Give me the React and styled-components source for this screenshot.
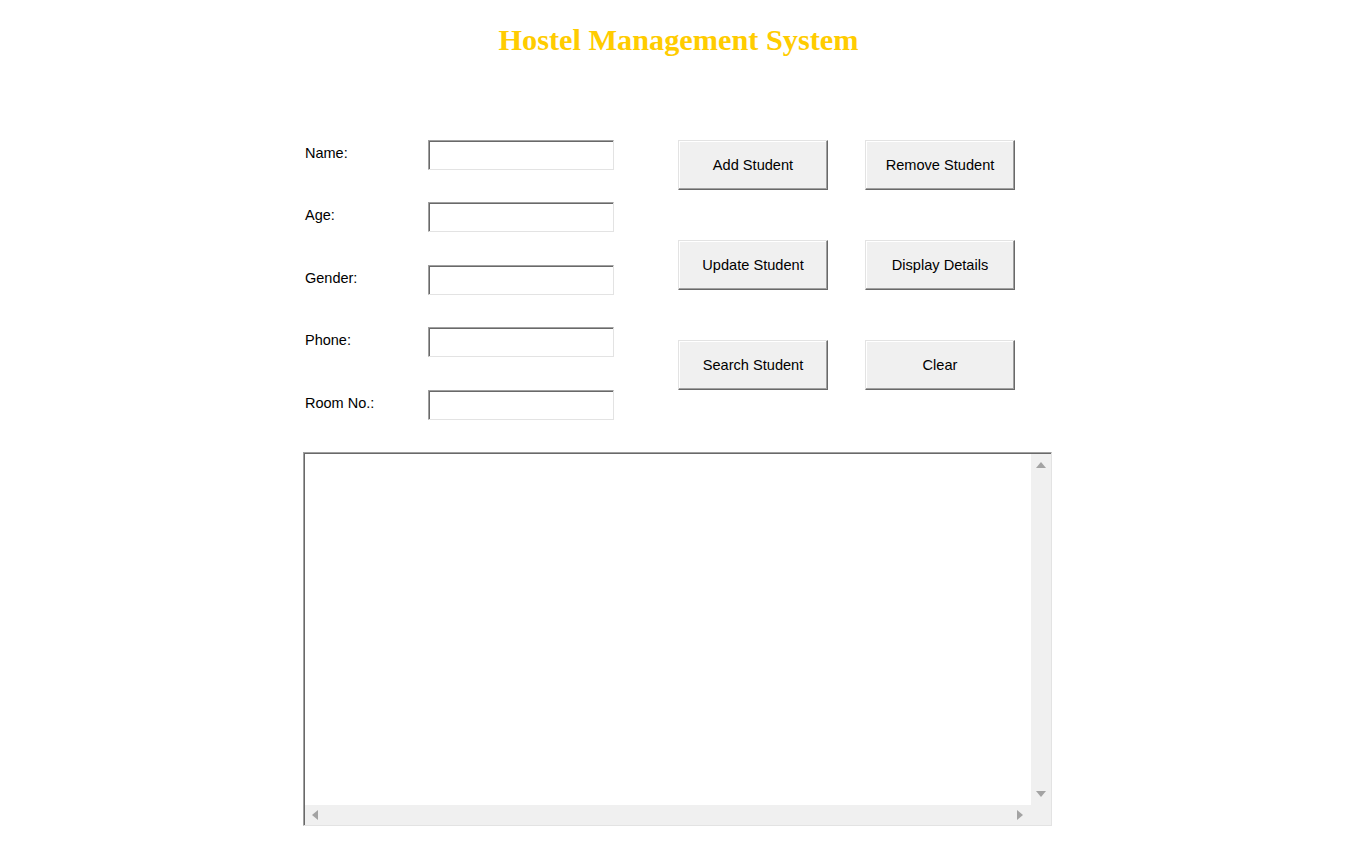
import React from 'react'
import styled, { createGlobalStyle } from 'styled-components'

const GlobalStyle = createGlobalStyle`
  html, body {
    margin: 0;
    padding: 0;
    background: #fff;
  }
  body {
    font-family: 'Liberation Sans', Arial, sans-serif;
  }
`

const Page = styled.div`
  width: 1357px;
  height: 852px;
  display: flex;
  flex-direction: column;
  align-items: center;
`

const Title = styled.h1`
  margin: 22px 0 0;
  font-family: 'Liberation Serif', 'Times New Roman', serif;
  font-weight: 700;
  font-size: 30.3px;
  line-height: 36px;
  color: #ffcc00;
`

const Main = styled.div`
  width: 749px;
  margin-top: 82px;
  display: flex;
  flex-direction: column;
`

const Top = styled.div`
  display: flex;
  height: 312px;
`

const Fields = styled.div`
  display: flex;
  flex-direction: column;
  width: 374px;
`

const Row = styled.div`
  display: flex;
  height: 30px;
  margin-bottom: ${(p) => (p.$odd ? 33 : 32)}px;
`

const Label = styled.label`
  width: 123px;
  padding: 5px 0 0 1px;
  font-size: 14.5px;
  line-height: 16px;
  color: #000;
`

const Input = styled.input`
  box-sizing: border-box;
  width: 186px;
  height: 30px;
  margin: 0;
  padding: 2px 4px;
  background: #fff;
  border: 1px solid;
  border-color: #a0a0a0 #e3e3e3 #e3e3e3 #a0a0a0;
  box-shadow: inset 1px 1px 0 #696969;
  font-family: 'Liberation Sans', Arial, sans-serif;
  font-size: 14px;
  outline: none;
`

const Buttons = styled.div`
  display: grid;
  grid-template-columns: 150px 150px;
  grid-auto-rows: 50px;
  column-gap: 37px;
  row-gap: 50px;
  align-content: start;
`

const Button = styled.button`
  box-sizing: border-box;
  margin: 0;
  padding: 0;
  background: #f0f0f0;
  border: 1px solid;
  border-color: #e3e3e3 #696969 #696969 #e3e3e3;
  box-shadow: inset -1px -1px 0 #a0a0a0, inset 1px 1px 0 #fff;
  font-family: 'Liberation Sans', Arial, sans-serif;
  font-size: 14.6px;
  color: #000;
`

const Output = styled.div`
  box-sizing: border-box;
  height: 374px;
  margin-left: -1px;
  width: 749px;
  display: grid;
  grid-template-columns: 1fr 20px;
  grid-template-rows: 1fr 20px;
  border: 1px solid;
  border-color: #a0a0a0 #e3e3e3 #e3e3e3 #a0a0a0;
  box-shadow: inset 1px 1px 0 #696969;
  padding: 1px 0 0 1px;
  background: #fff;
`

const Text = styled.textarea`
  margin: 0;
  padding: 2px;
  border: none;
  resize: none;
  outline: none;
  overflow: hidden;
  background: #fff;
  font-family: 'Liberation Mono', 'Courier New', monospace;
  font-size: 13px;
`

const VBar = styled.div`
  background: #f0f0f0;
  display: flex;
  flex-direction: column;
  justify-content: space-between;
  align-items: center;
  padding: 6px 0 6px;
`

const HBar = styled.div`
  grid-column: 1 / 3;
  background: #f0f0f0;
  display: flex;
  justify-content: space-between;
  align-items: center;
  padding: 0 26px 0 5px;
`

const Arrow = ({ dir }) => {
  const pts = {
    up: '0,8 5,2 10,8',
    down: '0,2 10,2 5,8',
    left: '8,0 8,10 2,5',
    right: '2,0 2,10 8,5',
  }[dir]
  return (
    <svg width="10" height="10" viewBox="0 0 10 10">
      <polygon points={pts} fill="#a3a3a3" />
    </svg>
  )
}

const fields = ['Name:', 'Age:', 'Gender:', 'Phone:', 'Room No.:']
const actions = [
  'Add Student',
  'Remove Student',
  'Update Student',
  'Display Details',
  'Search Student',
  'Clear',
]

export default function App() {
  return (
    <Page>
      <GlobalStyle />
      <Title>Hostel Management System</Title>
      <Main>
        <Top>
          <Fields>
            {fields.map((f, i) => (
              <Row key={f} $odd={i % 2 === 1}>
                <Label>{f}</Label>
                <Input />
              </Row>
            ))}
          </Fields>
          <Buttons>
            {actions.map((a) => (
              <Button key={a}>{a}</Button>
            ))}
          </Buttons>
        </Top>
        <Output>
          <Text readOnly />
          <VBar>
            <Arrow dir="up" />
            <Arrow dir="down" />
          </VBar>
          <HBar>
            <Arrow dir="left" />
            <Arrow dir="right" />
          </HBar>
        </Output>
      </Main>
    </Page>
  )
}
